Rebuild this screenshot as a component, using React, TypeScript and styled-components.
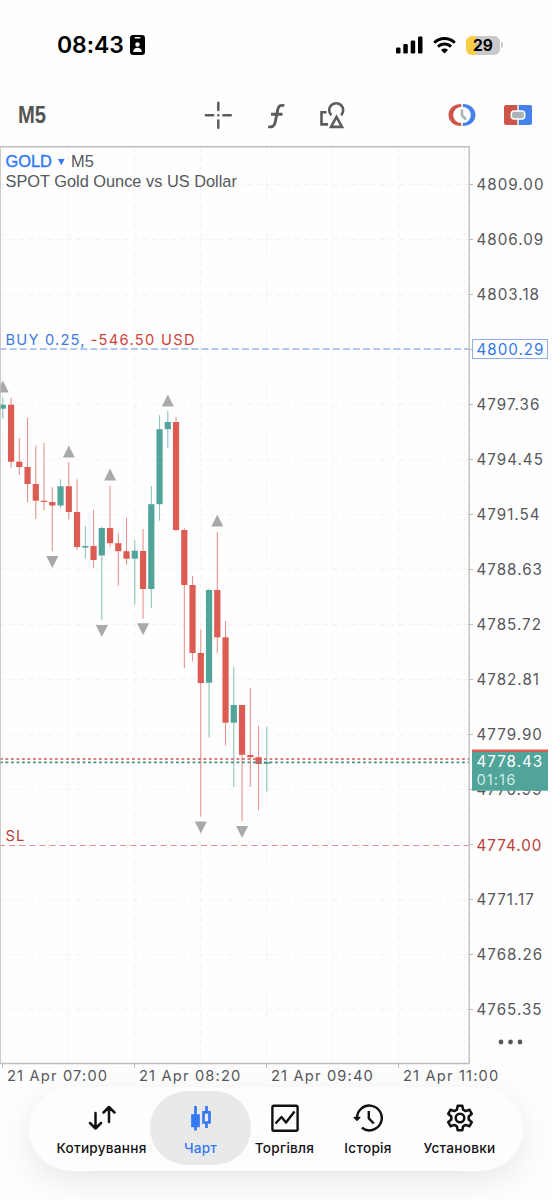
import React from "react";
import styled, { createGlobalStyle } from "styled-components";

const Global = createGlobalStyle`
  * { box-sizing: border-box; }
  body { margin: 0; background: #fff; }
`;

const Screen = styled.main`
  width: 552px;
  height: 1200px;
  overflow: hidden;
  display: flex;
  flex-direction: column;
  background: #fefefe;
  font-family: Inter, "Liberation Sans", sans-serif;
`;

const StatusBar = styled.header`
  height: 90px;
  padding: 0 49px 0 57px;
  display: flex;
  align-items: center;
  justify-content: space-between;
  color: #000;
`;

const StatusGroup = styled.div<{ $gap: number }>`
  display: flex;
  align-items: center;
  gap: ${(p) => p.$gap}px;
`;

const Clock = styled.time`
  font-size: 23px;
  font-weight: 600;
  letter-spacing: -0.1px;
  line-height: 28px;
`;

const Battery = styled.div`
  width: 34px;
  height: 19px;
  border-radius: 6px;
  background: linear-gradient(90deg, #f7cd46 0 10px, #c9c9c9 10px);
  font-size: 15.5px;
  font-weight: 700;
  line-height: 19px;
  text-align: center;
`;

const BatteryCap = styled.i`
  width: 2px;
  height: 6px;
  margin-left: 1px;
  border-radius: 0 2px 2px 0;
  background: #c9c9c9;
`;

const Toolbar = styled.nav`
  height: 56px;
  padding: 0 20px 6px 18px;
  display: flex;
  align-items: center;
`;

const Timeframe = styled.button`
  width: 186px;
  padding: 0;
  border: 0;
  background: none;
  color: #555;
  text-align: left;
  font: 700 23.5px/30px "Liberation Sans", sans-serif;
`;

const Condensed = styled.span`
  display: inline-block;
  transform: scaleX(0.86);
  transform-origin: left;
`;

const ToolIcons = styled.div`
  flex: 1;
  display: flex;
  align-items: center;
  gap: 29.5px;
`;

const TradeIcons = styled.div`
  display: flex;
  align-items: center;
  gap: 28.5px;
`;

const ChartArea = styled.section`
  height: 941px;
  flex: none;
`;

const ChartSvg = styled.svg`
  display: block;
`;

const Label = styled.text<{ $color?: string; $size?: number; $spacing?: number }>`
  fill: ${(p) => p.$color ?? "#56585c"};
  font-size: ${(p) => p.$size ?? 15.2}px;
  letter-spacing: ${(p) => p.$spacing ?? 1}px;
`;

const Heading = styled(Label)`
  font-family: "Liberation Sans", sans-serif;
  letter-spacing: 0;
`;

const TabBar = styled.footer`
  width: 494px;
  height: 84px;
  margin: 0 auto;
  padding: 0 22px 2px 24px;
  position: relative;
  flex: none;
  display: flex;
  align-items: center;
  border-radius: 42px;
  background: #fdfdfd;
  box-shadow: 0 10px 34px rgba(0, 0, 0, 0.095);
`;

const Tab = styled.button<{ $width: number; $active?: boolean }>`
  width: ${(p) => p.$width}px;
  height: 74px;
  padding: 5px 0 0;
  border: 0;
  border-radius: 37px;
  flex: none;
  display: flex;
  flex-direction: column;
  align-items: center;
  justify-content: center;
  gap: 6.5px;
  background: ${(p) => (p.$active ? "#e9e9e9" : "transparent")};
  color: ${(p) => (p.$active ? "#3478f6" : "#111")};
  font: 500 13.6px/18px Inter, sans-serif;
  letter-spacing: 0.25px;
  white-space: nowrap;
`;

const GRID_X = [2.5, 68.5, 134.5, 200.5, 266.5, 332.5, 398.5, 464.5];
const PRICES = [
  "4809.00", "4806.09", "4803.18", "", "4797.36", "4794.45", "4791.54", "4788.63",
  "4785.72", "4782.81", "4779.90", "4776.99", "", "4771.17", "4768.26", "4765.35",
];
const TIMES = ["21 Apr 07:00", "21 Apr 08:20", "21 Apr 09:40", "21 Apr 11:00"];

/* rising flag, wick top, body top, body bottom, wick bottom */
const CANDLES: [number, number, number, number, number][] = [
  [1, 397.3, 404.7, 408.7, 418.7],
  [0, 397.7, 404.7, 461.7, 467.7],
  [0, 438, 461.7, 467, 475],
  [0, 417.7, 467, 484, 502],
  [0, 445.7, 484, 500.7, 519],
  [0, 443, 500.7, 501.9, 510],
  [0, 487.3, 502, 505.5, 551.3],
  [1, 479.3, 486.3, 505.5, 508.3],
  [0, 462.3, 486.3, 512, 519.3],
  [0, 479.3, 512, 547, 550],
  [1, 526.3, 546, 547.6, 558.3],
  [0, 510, 546, 560, 567.7],
  [1, 526.7, 528, 555.5, 620],
  [0, 485.7, 528, 543.2, 547.3],
  [0, 533.3, 543.2, 551.2, 585.7],
  [0, 518, 551.2, 558.7, 564.7],
  [1, 540.5, 550.7, 558.7, 604.7],
  [0, 529, 551, 589, 618.7],
  [1, 486, 504.2, 589, 608],
  [1, 415.3, 429.2, 504.2, 520.7],
  [1, 411, 422, 429.2, 448],
  [0, 417, 422, 530, 531.3],
  [0, 528.3, 530, 585, 668.3],
  [0, 576, 585, 653, 661.3],
  [0, 629.3, 653, 683, 816.7],
  [1, 588.7, 590, 682.7, 737.3],
  [0, 531.7, 590, 637.3, 653.3],
  [0, 621, 637.3, 722.7, 745.3],
  [1, 666.7, 705, 722.7, 787],
  [0, 705, 705, 754.8, 821],
  [0, 687.7, 755, 757.2, 786.7],
  [0, 726, 757.2, 764, 810],
  [1, 726.7, 762.2, 763.8, 791.7],
];
/* candle index, top edge, points down */
const FRACTALS: [number, number, boolean][] = [
  [0, 380.5, false], [8, 445.5, false], [13, 468.5, false], [20, 394.5, false], [26, 514.5, false],
  [6, 556, true], [12, 625, true], [17, 623.3, true], [24, 821.5, true], [29, 826, true],
];

const GREEN = "#51a499";
const RED = "#dc5b53";
const centre = (i: number) => 2.8 + 8.25 * i;
const priceY = (i: number) => Math.floor(184.5 + 54.97 * i) + 0.5;

const Chart = () => (
  <ChartSvg width="552" height="941" viewBox="0 146 552 941">
    <g stroke="#f2f2f2" strokeWidth="1" strokeDasharray="5 4.5">
      {GRID_X.map((x) => <line key={x} x1={x} x2={x} y1="147" y2="1063" />)}
      {PRICES.map((p, i) => p && <line key={i} x1="0" x2="469" y1={priceY(i)} y2={priceY(i)} />)}
    </g>
    {CANDLES.map(([up, high, top, bottom, low], i) => {
      const color = up ? GREEN : RED;
      return (
        <g key={i} fill={color}>
          <rect x={centre(i) - 0.5} y={high} width="1" height={low - high} opacity="0.7" />
          <rect x={centre(i) - 3.1} y={top} width="6.2" height={bottom - top} />
        </g>
      );
    })}
    <g fill="#a9a9a9">
      {FRACTALS.map(([i, y, down]) => {
        const x = centre(i);
        return <path key={i} d={down ? `M${x - 6} ${y}h12l-6 12z` : `M${x - 6} ${y + 12}h12l-6 -12z`} />;
      })}
    </g>
    <line x1="0" x2="469" y1="349" y2="349" stroke="#9bb6ec" strokeWidth="1.3" strokeDasharray="7 3.1" strokeDashoffset="0.5" />
    <line x1="0" x2="469" y1="845.5" y2="845.5" stroke="#dd918d" strokeWidth="1" strokeDasharray="6 4.1" strokeDashoffset="1" />
    <line x1="0" x2="469" y1="759" y2="759" stroke="#cd5753" strokeWidth="1.7" strokeDasharray="2.8 2.7" />
    <line x1="0" x2="469" y1="762.3" y2="762.3" stroke="#468f86" strokeWidth="1.7" strokeDasharray="2.8 2.7" />
    <g stroke="#bdbdbd" fill="none">
      <path d="M0 146.7H469.2V1063.5H0" strokeWidth="1.4" />
      <path d="M0.4 147V1063" strokeWidth="0.9" />
      {PRICES.map((_, i) => <line key={i} x1="469" x2="473" y1={priceY(i)} y2={priceY(i)} />)}
      {[2.5, 134.5, 266.5, 398.5].map((x) => <line key={x} x1={x} x2={x} y1="1063" y2="1068" />)}
    </g>

    <Heading x="5.5" y="166.5" $size={16.4} $color="#3478f6" stroke="#3478f6" strokeWidth="0.4">GOLD</Heading>
    <path d="M58 158.900h6.600l-3.300 6.300z" fill="#3478f6" />
    <Heading x="71" y="166.500" $size={16.4}>M5</Heading>
    <Heading x="5.5" y="186.500" $size={16.35}>SPOT Gold Ounce vs US Dollar</Heading>
    <Label x="5.5" y="344.700" $size={14.7} $spacing={1.2} $color="#3f79e0">BUY 0.25,</Label>
    <Label x="90.500" y="344.700" $size={14.7} $spacing={1.3} $color="#cf4339">-546.50 USD</Label>
    <Label x="5.500" y="841" $size={14.7} $color="#b5403a">SL</Label>

    {PRICES.map((price, i) => price && <Label key={price} x="476.500" y={priceY(i) + 5.3}>{price}</Label>)}
    <rect x="472.500" y="339.500" width="75" height="19" fill="#fff" stroke="#8fb0ef" />
    <Label x="476.500" y="354.800" $color="#3478e8">4800.29</Label>
    <Label x="476.500" y="851" $color="#bb3f39">4774.00</Label>
    <rect x="472" y="749.500" width="76" height="3" fill={RED} />
    <rect x="472" y="752" width="76" height="38.700" fill={GREEN} />
    <Label x="476.500" y="767.300" $color="#fff">4778.43</Label>
    <Label x="476.500" y="785" $color="#cdeae5" $size={14.8}>01:16</Label>
    <g fill="#56585c">
      {[501, 510.5, 520].map((x) => <circle key={x} cx={x} cy="1042" r="2.400" />)}
    </g>
    {TIMES.map((t, i) => <Label key={t} x={7 + 132 * i} y="1081" $size={14.7} $spacing={1.15}>{t}</Label>)}
  </ChartSvg>
);

const App = () => (
  <Screen>
    <Global />
    <StatusBar>
      <StatusGroup $gap={6}>
        <Clock>08:43</Clock>
        <svg width="15" height="20" viewBox="0 0 15 20">
          <rect width="15" height="20" rx="3.2" />
          <g fill="#fff">
            <rect x="4.5" y="2" width="6" height="1.5" rx=".7" />
            <circle cx="7.5" cy="9.5" r="2.2" />
            <path d="M3.2 17c0-3 2-4.3 4.3-4.3s4.3 1.3 4.3 4.3z" />
          </g>
        </svg>
      </StatusGroup>
      <StatusGroup $gap={10}>
        <svg width="27" height="18" viewBox="0 0 27 18">
          <rect x="0" y="11.5" width="4.5" height="6" rx="1.3" />
          <rect x="7.3" y="8" width="4.5" height="9.5" rx="1.3" />
          <rect x="14.7" y="4.5" width="4.5" height="13" rx="1.3" />
          <rect x="22" y="0.5" width="4.5" height="17" rx="1.3" />
        </svg>
        <svg width="23" height="17" viewBox="0 0 23 17" fill="none" stroke="#000" strokeWidth="2.9">
          <path d="M1.2 5.7a14.7 14.7 0 0 1 20.6 0" />
          <path d="M5 9.7a9.2 9.2 0 0 1 13 0" />
          <path d="M8 12.9a5 5 0 0 1 7 0L11.5 16.5z" fill="#000" stroke="none" />
        </svg>
        <StatusGroup $gap={0}>
          <Battery>29</Battery>
          <BatteryCap />
        </StatusGroup>
      </StatusGroup>
    </StatusBar>

    <Toolbar>
      <Timeframe><Condensed>M5</Condensed></Timeframe>
      <ToolIcons>
        <svg width="28" height="28" viewBox="0 0 28 28" stroke="#5c5c5c" strokeWidth="2.5" strokeLinecap="round">
          <path d="M14.3 1.8v7.2M14.3 19.4v7.4M1.9 14.3h7.2M19.4 14.3h7.4M14.3 14.3v.01" />
        </svg>
        <svg width="28" height="28" viewBox="0 0 28 28" fill="none" stroke="#5c5c5c" strokeWidth="2.9">
          <path d="M22.3 4.7c-3.700-1-5.800 0-6.500 3.600l-2.600 13c-.8 3.800-2.900 5.300-7 4.300M9 13.300h11.500" />
        </svg>
        <svg width="28" height="28" viewBox="0 0 28 28" fill="none" stroke="#5c5c5c" strokeWidth="2.6">
          <path d="M12.300 14.200a7 7 0 1 1 9.800 0" />
          <path d="M7.600 11.300H2.500v12.100h6.600" />
          <path d="M17.500 15.900l-5.500 10h11z" />
        </svg>
      </ToolIcons>
      <TradeIcons>
        <svg width="28" height="24" viewBox="0 0 28 24">
          <path d="M13.2 1C6 1 .5 5.5.5 12s5.5 11 12.7 11v-3a8 8 0 0 1 0-16z" fill="#cd5448" />
          <path d="M14.8 1C22 1 27.5 5.5 27.5 12S22 23 14.8 23v-3a8 8 0 0 0 0-16z" fill="#4682ec" />
          <path d="M14 6.5v6l4 4" fill="none" stroke="#aab4b8" strokeWidth="2.6" />
        </svg>
        <svg width="28" height="20" viewBox="0 0 28 20">
          <path d="M13.3 0H2a2 2 0 0 0-2 2v16a2 2 0 0 0 2 2h11.3z" fill="#cd5448" />
          <path d="M14.7 0H26a2 2 0 0 1 2 2v16a2 2 0 0 1-2 2H14.7z" fill="#4682ec" />
          <rect x="7.3" y="6" width="13.4" height="8" rx="3" fill="#aab4b8" stroke="#fff" strokeWidth="1.5" />
        </svg>
      </TradeIcons>
    </Toolbar>

    <ChartArea><Chart /></ChartArea>

    <TabBar>
      <Tab $width={97}>
        <svg width="28" height="28" viewBox="0 0 28 28" fill="none" stroke="currentColor" strokeWidth="2.5" strokeLinecap="round" strokeLinejoin="round">
          <path d="M7.500 9v15.500M2 19l5.500 5.500L13 19M21 18V3M15.500 8.500L21 3l5.500 5.500" />
        </svg>
        Котирування
      </Tab>
      <Tab $width={101} $active>
        <svg width="28" height="28" viewBox="0 0 28 28" fill="none" stroke="currentColor" strokeWidth="2.7">
          <path d="M8.500 2v24.500M19.500 2v5.500M19.500 19v5" />
          <path d="M5.500 11.500h6v10.500h-6z" fill="currentColor" />
          <path d="M16.500 8.300h6v10.200h-6z" />
        </svg>
        Чарт
      </Tab>
      <Tab $width={67}>
        <svg width="28" height="28" viewBox="0 0 28 28" fill="none" stroke="currentColor" strokeWidth="2.4" strokeLinejoin="round">
          <rect x="1.4" y="1.7" width="25.2" height="25" rx="1.5" />
          <path d="M4.5 19.5l6-6.5 4.5 5.5 8.5-11" />
        </svg>
        Торгівля
      </Tab>
      <Tab $width={100}>
        <svg width="30" height="28" viewBox="0 0 30 28" fill="none" stroke="currentColor" strokeWidth="2.4" strokeLinejoin="round">
          <path d="M4 14.500a12.400 12.400 0 1 1 4.800 9.300M15.800 7v7.300l5 5.200" />
          <path d="M1.200 13.500h5.600l-2.800 2.700z" fill="currentColor" strokeWidth="1.400" />
        </svg>
        Історія
      </Tab>
      <Tab $width={83}>
        <svg width="28" height="28" viewBox="0 0 28 28" fill="none" stroke="currentColor" strokeWidth="2.5" strokeLinejoin="round">
          <path d="M11.7 1.7h4.6l.8 4 2.5 1.4 3.9-1.3 2.3 4-3.1 2.7v3l3.1 2.7-2.3 4-3.9-1.3-2.5 1.4-.8 4h-4.6l-.8-4-2.5-1.4-3.9 1.3-2.3-4 3.1-2.7v-3L2.2 9.8l2.3-4 3.9 1.3 2.5-1.4z" />
          <circle cx="14" cy="14" r="4.3" />
        </svg>
        Установки
      </Tab>
    </TabBar>
  </Screen>
);

export default App;
